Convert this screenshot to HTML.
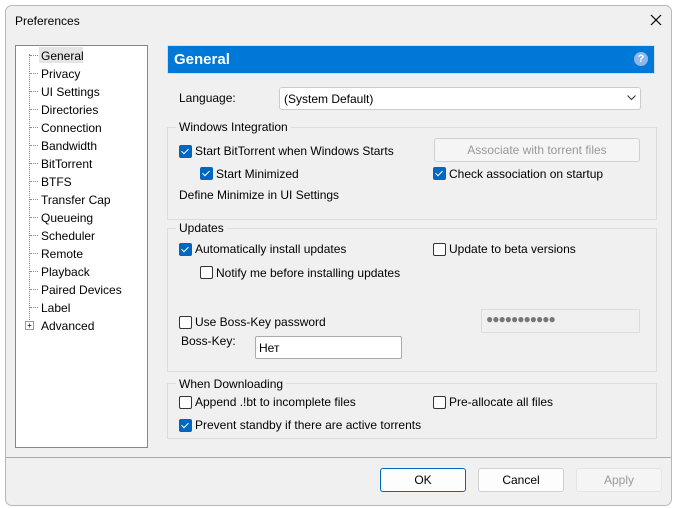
<!DOCTYPE html><html><head><style>
body{margin:0;width:676px;height:508px;background:#fff;font-family:"Liberation Sans",sans-serif;font-size:12px;color:#000;position:relative;overflow:hidden}
.a{position:absolute;white-space:nowrap}
.win{position:absolute;left:5px;top:5px;width:665px;height:499px;border:1px solid #b8b8b8;border-radius:7px;background:#f0f0f0;overflow:hidden}
.tree{left:15px;top:45px;width:131px;height:401px;border:1px solid #828790;background:#fff}
.grp{border:1px solid #dcdcdc}
.cb{position:absolute;width:11px;height:11px;border:1px solid #333;border-radius:2px;background:#fff}
.cb.on{background:#0067c0;border-color:#0067c0}
.cb.on:after{content:"";position:absolute;left:3px;top:1px;width:3px;height:6px;border:solid #fff;border-width:0 1px 1px 0;transform:rotate(45deg)}
.btn{position:absolute;height:22px;border:1px solid #d0d0d0;border-radius:3px;background:#fdfdfd;text-align:center;line-height:22px}
.dot{position:absolute;border-top:1px dotted #888;width:8px}
</style></head><body>
<div class="win"></div>
<div class="a" style="left:15px;top:14px">Preferences</div>
<svg class="a" style="left:650px;top:14px" width="12" height="12"><path d="M1 1L11 11M11 1L1 11" stroke="#000" stroke-width="1.2"/></svg>
<div class="a tree"></div>
<div class="a" style="left:29px;top:54px;height:270px;border-left:1px dotted #888"></div>
<div class="a" style="left:39px;top:47px;width:44px;height:16px;background:#e5e5e5"></div>
<div class="a" style="left:41px;top:47px;line-height:18px">General<br>Privacy<br>UI Settings<br>Directories<br>Connection<br>Bandwidth<br>BitTorrent<br>BTFS<br>Transfer Cap<br>Queueing<br>Scheduler<br>Remote<br>Playback<br>Paired Devices<br>Label<br>Advanced</div>
<div class="dot" style="left:30px;top:55px"></div><div class="dot" style="left:30px;top:73px"></div><div class="dot" style="left:30px;top:91px"></div><div class="dot" style="left:30px;top:109px"></div><div class="dot" style="left:30px;top:127px"></div><div class="dot" style="left:30px;top:145px"></div><div class="dot" style="left:30px;top:163px"></div><div class="dot" style="left:30px;top:181px"></div><div class="dot" style="left:30px;top:199px"></div><div class="dot" style="left:30px;top:217px"></div><div class="dot" style="left:30px;top:235px"></div><div class="dot" style="left:30px;top:253px"></div><div class="dot" style="left:30px;top:271px"></div><div class="dot" style="left:30px;top:289px"></div><div class="dot" style="left:30px;top:307px"></div>
<div class="a" style="left:25px;top:321px;width:7px;height:7px;border:1px solid #999;background:#fff;font-size:8px;line-height:7px;text-align:center">+</div>
<div class="a" style="left:167px;top:45px;width:488px;height:29px;background:#0078d7;border:1px solid #ddd;box-sizing:border-box"></div>
<div class="a" style="left:174px;top:51px;color:#fff;font-weight:bold;font-size:15px">General</div>
<div class="a" style="left:634px;top:52px;width:14px;height:14px;border-radius:50%;background:#8fb6e8;color:#fff;font-size:11px;text-align:center;line-height:14px;font-weight:bold">?</div>
<div class="a" style="left:179px;top:91px">Language:</div>
<div class="a" style="left:279px;top:87px;width:360px;height:21px;border:1px solid #ccc;border-radius:3px;background:#fff"></div>
<div class="a" style="left:284px;top:92px">(System Default)</div>
<svg class="a" style="left:627px;top:95px" width="9" height="6"><path d="M0.5 0.5L4.5 4.5L8.5 0.5" stroke="#333" fill="none"/></svg>
<div class="a grp" style="left:167px;top:127px;width:488px;height:91px"></div>
<div class="a" style="left:176px;top:120px;background:#f0f0f0;padding:0 3px">Windows Integration</div>
<div class="cb on" style="left:179px;top:145px"></div><div class="a" style="left:195px;top:144px">Start BitTorrent when Windows Starts</div>
<div class="btn" style="left:434px;top:138px;width:204px;color:#999;background:#f5f5f5">Associate with torrent files</div>
<div class="cb on" style="left:200px;top:167px"></div><div class="a" style="left:216px;top:167px">Start Minimized</div>
<div class="cb on" style="left:433px;top:167px"></div><div class="a" style="left:449px;top:167px">Check association on startup</div>
<div class="a" style="left:179px;top:188px">Define Minimize in UI Settings</div>
<div class="a grp" style="left:167px;top:228px;width:488px;height:142px"></div>
<div class="a" style="left:176px;top:221px;background:#f0f0f0;padding:0 3px">Updates</div>
<div class="cb on" style="left:179px;top:243px"></div><div class="a" style="left:195px;top:242px">Automatically install updates</div>
<div class="cb" style="left:433px;top:243px"></div><div class="a" style="left:449px;top:242px">Update to beta versions</div>
<div class="cb" style="left:200px;top:266px"></div><div class="a" style="left:216px;top:266px">Notify me before installing updates</div>
<div class="cb" style="left:179px;top:316px"></div><div class="a" style="left:195px;top:315px">Use Boss-Key password</div>
<div class="a" style="left:481px;top:309px;width:157px;height:22px;border:1px solid #ddd"></div>
<div class="a" style="left:486px;top:312px;color:#777;font-size:12px;letter-spacing:-1px">●●●●●●●●●●●</div>
<div class="a" style="left:181px;top:334px">Boss-Key:</div>
<div class="a" style="left:255px;top:336px;width:145px;height:21px;border:1px solid #aaa;border-radius:2px;background:#fff"></div>
<div class="a" style="left:259px;top:341px">Нет</div>
<div class="a grp" style="left:167px;top:383px;width:488px;height:54px"></div>
<div class="a" style="left:176px;top:377px;background:#f0f0f0;padding:0 3px">When Downloading</div>
<div class="cb" style="left:179px;top:396px"></div><div class="a" style="left:195px;top:395px">Append .!bt to incomplete files</div>
<div class="cb" style="left:433px;top:396px"></div><div class="a" style="left:449px;top:395px">Pre-allocate all files</div>
<div class="cb on" style="left:179px;top:419px"></div><div class="a" style="left:195px;top:418px">Prevent standby if there are active torrents</div>
<div class="a" style="left:6px;top:457px;width:665px;border-top:1px solid #aaa"></div>
<div class="btn" style="left:380px;top:468px;width:84px;border-color:#0067c0">OK</div>
<div class="btn" style="left:478px;top:468px;width:84px">Cancel</div>
<div class="btn" style="left:576px;top:468px;width:84px;color:#999;background:#f5f5f5;border-color:#e3e3e3">Apply</div>
</body></html>
